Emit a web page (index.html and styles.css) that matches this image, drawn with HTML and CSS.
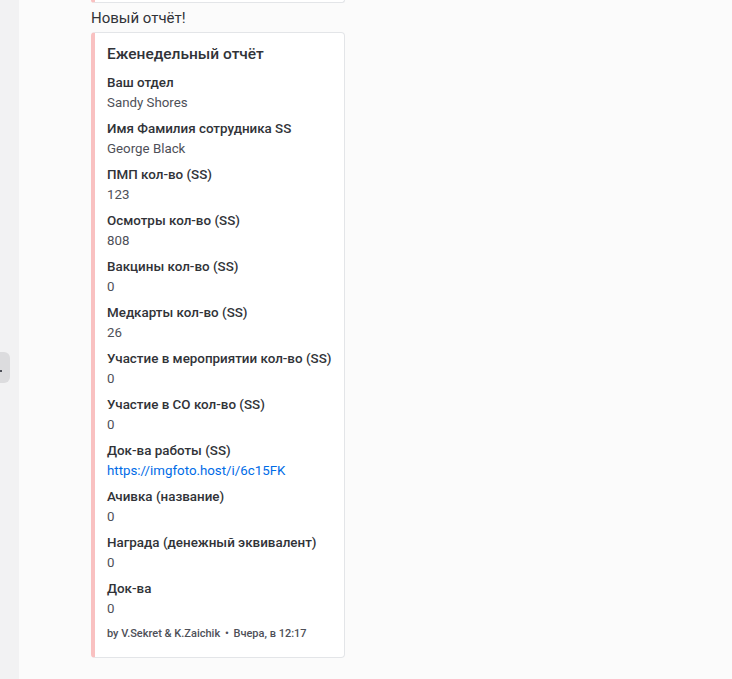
FILE: index.html
```html
<!DOCTYPE html>
<html lang="ru">
<head>
  <meta charset="UTF-8">
  <title>Новый отчёт</title>
  <link rel="stylesheet" href="styles.css">
</head>
<body>
  <div class="app">
    <div class="side">
      <div class="side-tab"></div>
    </div>
    <div class="chat">
      <div class="message">
        <div class="embed-prev"></div>
        <div class="msg-text">Новый отчёт!</div>
        <div class="embed">
          <div class="embed-title">Еженедельный отчёт</div>
          <div class="fields">
            <div class="field"><div class="field-name">Ваш отдел</div><div class="field-value">Sandy Shores</div></div>
            <div class="field"><div class="field-name">Имя Фамилия сотрудника SS</div><div class="field-value">George Black</div></div>
            <div class="field"><div class="field-name">ПМП кол-во (SS)</div><div class="field-value">123</div></div>
            <div class="field"><div class="field-name">Осмотры кол-во (SS)</div><div class="field-value">808</div></div>
            <div class="field"><div class="field-name">Вакцины кол-во (SS)</div><div class="field-value">0</div></div>
            <div class="field"><div class="field-name">Медкарты кол-во (SS)</div><div class="field-value">26</div></div>
            <div class="field"><div class="field-name">Участие в мероприятии кол-во (SS)</div><div class="field-value">0</div></div>
            <div class="field"><div class="field-name">Участие в СО кол-во (SS)</div><div class="field-value">0</div></div>
            <div class="field"><div class="field-name">Док-ва работы (SS)</div><div class="field-value"><a class="link" href="#">https://imgfoto.host/i/6c15FK</a></div></div>
            <div class="field"><div class="field-name">Ачивка (название)</div><div class="field-value">0</div></div>
            <div class="field"><div class="field-name">Награда (денежный эквивалент)</div><div class="field-value">0</div></div>
            <div class="field"><div class="field-name">Док-ва</div><div class="field-value">0</div></div>
          </div>
          <div class="embed-footer">by V.Sekret &amp; K.Zaichik <span class="dot">•</span> Вчера, в 12:17</div>
        </div>
      </div>
    </div>
  </div>
</body>
</html>
```

FILE: styles.css
```css
html, body {
  margin: 0;
  height: 100%;
}
body {
  font-family: Roboto, "Noto Sans", Arial, sans-serif;
  background: #fbfbfb;
  color: #313338;
}
.app {
  display: flex;
  height: 679px;
  overflow: hidden;
}
.side {
  width: 19px;
  flex-shrink: 0;
  background: #f2f2f3;
}
.side-tab {
  width: 10px;
  height: 31px;
  margin-top: 352px;
  background: #dcdcde;
  border-radius: 0 6px 6px 0;
  position: relative;
}
.side-tab::after {
  content: "";
  position: absolute;
  left: 0;
  top: 18px;
  width: 2px;
  height: 2px;
  background: #4e5058;
}
.chat {
  flex: 1;
  padding-left: 72px;
}
.message {
  width: 254px;
}
.embed-prev {
  height: 2px;
  background: #fff;
  border: 1px solid #e3e5e8;
  border-top: none;
  border-left: 4px solid #f9c1c1;
  border-radius: 0 0 4px 4px;
}
.msg-text {
  font-size: 15px;
  line-height: 22px;
  margin-top: 4px;
  margin-bottom: 3px;
  color: #313338;
}
.embed {
  background: #fff;
  border: 1px solid #e3e5e8;
  border-left: 4px solid #f9c1c1;
  border-radius: 4px;
  padding: 8px 12px 15px 12px;
}
.embed-title {
  margin-top: 2px;
  font-size: 15.5px;
  line-height: 22px;
  font-weight: 500;
  color: #313338;
}
.fields {
  margin-top: 8px;
  display: grid;
  row-gap: 6px;
}
.field-name {
  font-size: 13.4px;
  line-height: 20px;
  font-weight: 500;
  color: #313338;
  white-space: nowrap;
}
.field-value {
  font-size: 13.3px;
  line-height: 20px;
  color: #4e5058;
}
.link {
  color: #006ce7;
  text-decoration: none;
}
.embed-footer {
  margin-top: 7px;
  font-size: 11px;
  line-height: 16px;
  font-weight: 500;
  color: #4e5058;
}
.dot {
  margin: 0 2px;
}
```
